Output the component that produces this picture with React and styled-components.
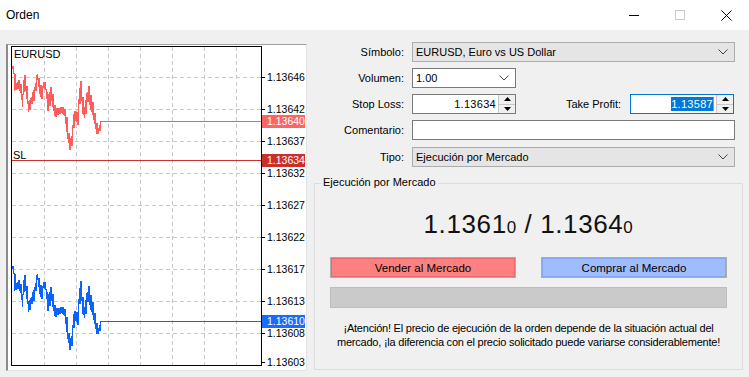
import styled, { createGlobalStyle } from "styled-components";

const GlobalStyle = createGlobalStyle`
  html, body {
    margin: 0;
    padding: 0;
    background: #f0f0f0;
  }
  body {
    font-family: "Liberation Sans", Arial, sans-serif;
    font-size: 11px;
    color: #000;
  }
`;

// ------------ chart data

const KEYS = [
  [11, 67, 2], [12, 70, 3], [13, 82, 8], [15, 85, 3], [17, 84, 4], [19, 88, 5],
  [21, 100, 6], [22, 85, 8], [23, 78, 4], [25, 92, 6], [27, 106, 5], [29, 102, 5],
  [31, 97, 5], [33, 92, 6], [35, 80, 5], [36, 76, 3], [38, 88, 6], [40, 93, 5],
  [42, 84, 3], [44, 86, 3], [46, 104, 6], [48, 98, 8], [49, 90, 4], [51, 100, 6],
  [53, 110, 6], [55, 112, 4], [58, 110, 3], [61, 110, 3], [63, 112, 4], [64, 118, 6],
  [66, 130, 8], [68, 145, 4], [70, 140, 5], [72, 120, 8], [74, 115, 6], [76, 118, 6],
  [78, 95, 10], [79, 84, 4], [81, 105, 8], [83, 112, 6], [85, 100, 8], [87, 92, 6],
  [89, 102, 8], [91, 108, 6], [93, 118, 6], [95, 128, 5], [97, 130, 3], [99, 124, 3],
];

function seriesPath(offset) {
  let d = "";
  let k = 0;
  for (let x = 11; x <= 99; x++) {
    while (k < KEYS.length - 2 && KEYS[k + 1][0] < x) k++;
    const [x0, y0, a0] = KEYS[k];
    const [x1, y1, a1] = KEYS[k + 1];
    const t = x1 === x0 ? 0 : Math.min(1, Math.max(0, (x - x0) / (x1 - x0)));
    const c = y0 + (y1 - y0) * t;
    const a = (a0 + (a1 - a0) * t) * (0.7 + 0.3 * Math.abs(Math.sin(x * 2.3)));
    const top = Math.round(c - a) + offset + 0.5;
    const bot = Math.round(c + a) + offset + 0.5;
    const px = x + 0.5;
    const [ya, yb] = x % 2 === 0 ? [top, bot] : [bot, top];
    if (!d) d = `M${px} ${ya}V${yb}`;
    else d += `H${px}V${ya}V${yb}`;
  }
  d += `H99.5V${121.5 + offset}H260`;
  return d;
}

const SCALE = [
  [77, "1.13646"], [109, "1.13642"], [141, "1.13637"], [173, "1.13632"],
  [205, "1.13627"], [237, "1.13622"], [269, "1.13617"], [301, "1.13613"],
  [333, "1.13608"], [362, "1.13603"],
];

const MARKS = [
  [121, "1.13640", "#ff6464"],
  [160, "1.13634", "#c8302c"],
  [321, "1.13610", "#1a6cff"],
];

const GRID_X = [43, 75, 107, 139, 171, 203, 235];
const GRID_Y = [77, 109, 141, 173, 205, 237, 269, 301, 333];

function Chart() {
  return (
    <svg width="298" height="325" viewBox="7 45 298 325" shapeRendering="crispEdges">
      <rect x="7" y="45" width="298" height="325" fill="#fff" />
      {GRID_X.map((x) => (
        <line key={x} x1={x + 0.5} y1="47" x2={x + 0.5} y2="365" stroke="#c8c8c8" strokeDasharray="4 3" />
      ))}
      {GRID_Y.map((y) => (
        <line key={y} x1="11" y1={y + 0.5} x2="260" y2={y + 0.5} stroke="#c8c8c8" strokeDasharray="4 3" />
      ))}
      <path d={seriesPath(0)} fill="none" stroke="#ff5c5c" />
      <path d={seriesPath(200)} fill="none" stroke="#0a62ff" />
      <line x1="11" y1="160.5" x2="260" y2="160.5" stroke="#c8302c" />
      <text x="12" y="159" fontSize="11" fontFamily="Liberation Sans, Arial, sans-serif" fill="#000">SL</text>
      <text x="13" y="58" fontSize="11" fontFamily="Liberation Sans, Arial, sans-serif" fill="#000">EURUSD</text>
      <rect x="10.5" y="46.5" width="250" height="319" fill="none" stroke="#000" />
      {SCALE.map(([y, v]) => (
        <g key={v}>
          <line x1="261" y1={y + 0.5} x2="264" y2={y + 0.5} stroke="#000" />
          <text x="266" y={y + 4} fontSize="10.5" fontFamily="Liberation Sans, Arial, sans-serif" fill="#000">{v}</text>
        </g>
      ))}
      {MARKS.map(([y, v, c]) => (
        <g key={v}>
          <rect x="261" y={y - 6} width="43" height="13" fill={c} />
          <text x="266" y={y + 4} fontSize="10.5" fontFamily="Liberation Sans, Arial, sans-serif" fill="#fff">{v}</text>
        </g>
      ))}
    </svg>
  );
}

// ------------ icons

function Chevron() {
  return (
    <svg width="10" height="6" viewBox="0 0 10 6">
      <path d="M0.5 0.5 L5 5 L9.5 0.5" fill="none" stroke="#444" strokeWidth="1" />
    </svg>
  );
}

function Spinner() {
  return (
    <Spin>
      <SpinHalf>
        <svg width="7" height="4" viewBox="0 0 7 4"><path d="M3.5 0 L7 4 L0 4 Z" fill="#000" /></svg>
      </SpinHalf>
      <SpinHalf>
        <svg width="7" height="4" viewBox="0 0 7 4"><path d="M0 0 L7 0 L3.5 4 Z" fill="#000" /></svg>
      </SpinHalf>
    </Spin>
  );
}

// ------------ page

export default function App() {
  return (
    <Window>
      <GlobalStyle />
      <TitleBar>
        <Title>Orden</Title>
        <Controls>
          <CtrlButton>
            <svg width="10" height="10" viewBox="0 0 10 10"><line x1="0" y1="5.5" x2="10" y2="5.5" stroke="#000" /></svg>
          </CtrlButton>
          <CtrlButton>
            <svg width="10" height="10" viewBox="0 0 10 10"><rect x="0.5" y="0.5" width="9" height="9" fill="none" stroke="#cccccc" /></svg>
          </CtrlButton>
          <CtrlButton>
            <svg width="11" height="11" viewBox="0 0 11 11"><path d="M0.5 0.5 L10.5 10.5 M10.5 0.5 L0.5 10.5" stroke="#000" fill="none" /></svg>
          </CtrlButton>
        </Controls>
      </TitleBar>

      <Body>
        <ChartPanel>
          <Chart />
        </ChartPanel>

        <Side>
          <Form>
            <Label>Símbolo:</Label>
            <Select $wide>
              <span>EURUSD, Euro vs US Dollar</span>
              <Chevron />
            </Select>

            <Label>Volumen:</Label>
            <Select $white $width={104}>
              <span>1.00</span>
              <Chevron />
            </Select>

            <Label>Stop Loss:</Label>
            <Pair>
              <NumField>
                <NumInput>1.13634</NumInput>
                <Spinner />
              </NumField>
              <InnerLabel>Take Profit:</InnerLabel>
              <NumField $focused>
                <NumInput>
                  <Selected>1.13587</Selected>
                  <Caret />
                </NumInput>
                <Spinner />
              </NumField>
            </Pair>

            <Label>Comentario:</Label>
            <TextBox />

            <Label $extra>Tipo:</Label>
            <Select $wide $extra>
              <span>Ejecución por Mercado</span>
              <Chevron />
            </Select>
          </Form>

          <Group>
            <Legend>Ejecución por Mercado</Legend>
            <Quote>
              1.1361<Small>0</Small> / 1.1364<Small>0</Small>
            </Quote>
            <Buttons>
              <TradeButton $fill="#ff8080" $edge="#e86a6a">Vender al Mercado</TradeButton>
              <TradeButton $fill="#9fbcff" $edge="#86a6ee">Comprar al Mercado</TradeButton>
            </Buttons>
            <Progress />
            <Notice>
              ¡Atención! El precio de ejecución de la orden depende de la situación actual del
              <br />
              mercado, ¡la diferencia con el precio solicitado puede variarse considerablemente!
            </Notice>
          </Group>
        </Side>
      </Body>
    </Window>
  );
}

// -------------------css

const Window = styled.div`
  width: 749px;
  height: 377px;
  background: #f0f0f0;
  display: flex;
  flex-direction: column;
  overflow: hidden;
`;

const TitleBar = styled.div`
  height: 30px;
  background: #fff;
  display: flex;
  align-items: center;
  justify-content: space-between;
  padding-left: 6px;
`;

const Title = styled.span`
  font-size: 12px;
`;

const Controls = styled.div`
  display: flex;
  height: 100%;
`;

const CtrlButton = styled.div`
  width: 46px;
  height: 100%;
  display: flex;
  align-items: center;
  justify-content: center;
`;

const Body = styled.div`
  flex: 1;
  display: flex;
  padding: 14px 0 0 6px;
`;

const ChartPanel = styled.div`
  width: 298px;
  height: 325px;
  border-top: 1px solid #a0a0a0;
  border-left: 2px solid #8a8a8a;
  border-right: 1px solid #e3e3e3;
  border-bottom: 1px solid #e3e3e3;
  svg {
    display: block;
  }
`;

const Side = styled.div`
  margin-left: 7px;
  width: 429px;
  display: flex;
  flex-direction: column;
`;

const Form = styled.div`
  display: grid;
  grid-template-columns: 90px 1fr;
  column-gap: 8px;
  row-gap: 6px;
  align-items: center;
  margin-top: -2px;
  padding-right: 8px;
`;

const Label = styled.div`
  text-align: right;
  white-space: nowrap;
  margin-top: ${(p) => (p.$extra ? "1px" : "0")};
`;

const Select = styled.div`
  height: 20px;
  box-sizing: border-box;
  width: ${(p) => (p.$wide ? "100%" : `${p.$width}px`)};
  margin-top: ${(p) => (p.$extra ? "1px" : "0")};
  background: ${(p) => (p.$white ? "#fff" : "#e5e5e5")};
  border: 1px solid ${(p) => (p.$white ? "#7a7a7a" : "#acacac")};
  display: flex;
  align-items: center;
  justify-content: space-between;
  padding: 0 6px 0 3px;
`;

const Pair = styled.div`
  display: flex;
  align-items: center;
`;

const InnerLabel = styled.span`
  width: 105px;
  text-align: right;
  margin-right: 9px;
`;

const NumField = styled.div`
  display: flex;
  height: 20px;
  width: 104px;
  box-sizing: border-box;
  border: 1px solid ${(p) => (p.$focused ? "#0078d7" : "#7a7a7a")};
  background: #fff;
`;

const NumInput = styled.div`
  flex: 1;
  display: flex;
  align-items: center;
  justify-content: flex-end;
  padding-right: 2px;
  letter-spacing: 0.3px;
`;

const Selected = styled.span`
  background: #0078d7;
  color: #fff;
  line-height: 14px;
`;

const Caret = styled.span`
  width: 1px;
  height: 14px;
  background: #ff7a00;
`;

const Spin = styled.div`
  width: 16px;
  display: flex;
  flex-direction: column;
  border-left: 1px solid #c8c8c8;
  background: #f0f0f0;
`;

const SpinHalf = styled.div`
  flex: 1;
  display: flex;
  align-items: center;
  justify-content: center;
  & + & {
    border-top: 1px solid #c8c8c8;
  }
`;

const TextBox = styled.div`
  height: 20px;
  box-sizing: border-box;
  border: 1px solid #7a7a7a;
  background: #fff;
`;

const Group = styled.div`
  position: relative;
  margin-top: 16px;
  height: 187px;
  box-sizing: border-box;
  border: 1px solid #dcdcdc;
  display: flex;
  flex-direction: column;
  align-items: center;
  padding: 0 15px;
`;

const Legend = styled.span`
  position: absolute;
  top: -8px;
  left: 6px;
  padding: 0 2px;
  background: #f0f0f0;
`;

const Quote = styled.div`
  margin-top: 25px;
  height: 33px;
  font-size: 26px;
  letter-spacing: 0.6px;
  color: #111;
`;

const Small = styled.span`
  font-size: 17px;
`;

const Buttons = styled.div`
  margin-top: 15px;
  width: 100%;
  display: flex;
  justify-content: space-between;
`;

const TradeButton = styled.div`
  width: 186px;
  height: 21px;
  box-sizing: border-box;
  border: 1px solid #adadad;
  background: ${(p) => p.$fill};
  box-shadow: inset 0 0 0 1px ${(p) => p.$edge};
  display: flex;
  align-items: center;
  justify-content: center;
  font-size: 11.5px;
`;

const Progress = styled.div`
  margin-top: 9px;
  width: 100%;
  height: 21px;
  box-sizing: border-box;
  background: #cacaca;
  border: 1px solid #bdbdbd;
`;

const Notice = styled.div`
  margin-top: 13px;
  text-align: center;
  white-space: nowrap;
  line-height: 14px;
  font-size: 11px;
  letter-spacing: -0.22px;
`;
